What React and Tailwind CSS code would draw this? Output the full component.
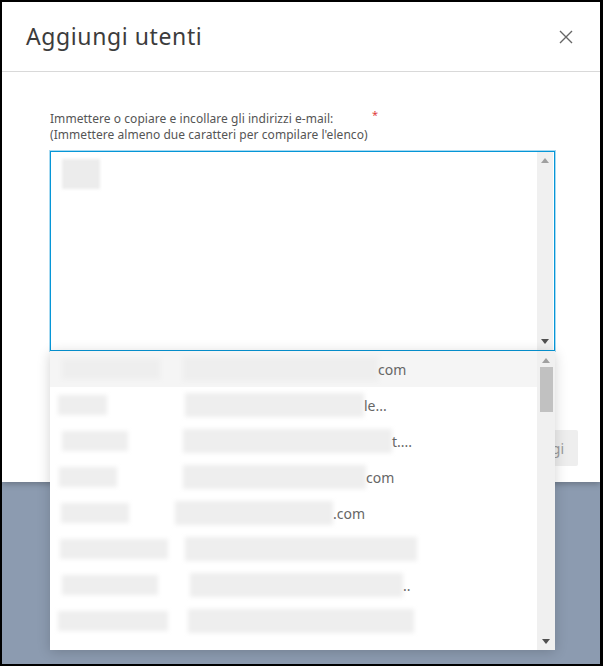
import React from "react";

const rows = [
  { l: [12, 110], r: [133, 195], tail: "com", hl: true },
  { l: [8, 57], r: [135, 179], tail: "le..." },
  { l: [12, 78], r: [133, 209], tail: "t...." },
  { l: [9, 67], r: [133, 183], tail: "com" },
  { l: [11, 79], r: [125, 158], tail: ".com" },
  { l: [10, 118], r: [135, 232], tail: "" },
  { l: [12, 108], r: [140, 213], tail: ".." },
  { l: [8, 118], r: [138, 226], tail: "" },
];

function Blur({ x, w, h = 22 }) {
  return (
    <div
      className="absolute top-1/2 -translate-y-1/2 bg-[#eeeeee] blur-[2px]"
      style={{ left: x, width: w, height: h }}
    />
  );
}

function Arrow({ up }) {
  return (
    <div
      className={
        up
          ? "w-0 h-0 border-x-[4px] border-x-transparent border-b-[5px] border-b-[#a0a0a0]"
          : "w-0 h-0 border-x-[4px] border-x-transparent border-t-[5px] border-t-[#505050]"
      }
    />
  );
}

export default function App() {
  return (
    <div
      className="w-[603px] h-[666px] bg-black pt-[2px] pl-[2px] pr-[3px] pb-[2px] overflow-hidden"
      style={{ fontFamily: '"Noto Sans", "Liberation Sans", sans-serif' }}
    >
      <div className="relative w-full h-full bg-[#8c9bb0]">
        {/* Dialog */}
        <div className="h-[480px] bg-white flex flex-col shadow-[0_2px_6px_rgba(0,0,0,0.25)]">
          <div className="h-[70px] border-b border-[#d9d9d9] flex items-center justify-between pl-[24px] pr-[26px] shrink-0">
            <span className="text-[23px] text-[#3c3c3c] tracking-[0.6px]">Aggiungi utenti</span>
            <svg width="16" height="16" viewBox="0 0 16 16" className="text-[#666]">
              <path d="M2 2 L14 14 M14 2 L2 14" stroke="currentColor" strokeWidth="1.4" fill="none" />
            </svg>
          </div>
          <div className="flex-1 pl-[48px] pr-[45px] pt-[39px] relative">
            <div className="flex text-[12px] leading-[16px] text-[#555] tracking-[0.05px]">
              <div className="w-[322px]">
                Immettere o copiare e incollare gli indirizzi e-mail:
                <br />
                (Immettere almeno due caratteri per compilare l'elenco)
              </div>
              <span className="text-[#e0403d] text-[11px] -mt-[4px]">*</span>
            </div>
            <div className="mt-[8px] h-[200px] w-[505px] border border-[#0696d7] shadow-[0_0_0_1px_rgba(6,150,215,0.35)] relative flex">
              <div className="flex-1 relative">
                <div className="absolute left-[11px] top-[7px] w-[38px] h-[30px] bg-[#ececec] blur-[1.5px]" />
              </div>
              <div className="w-[16px] mr-[1px] bg-[#f0f0f0] flex flex-col items-center justify-between py-[6px]">
                <Arrow up />
                <Arrow />
              </div>
            </div>
            {/* footer button */}
            <div className="absolute right-[22px] top-[358px] h-[36px] px-[14px] bg-[#eeeeee] rounded-[2px] flex items-center text-[14px] text-[#9a9a9a]">
              Aggiungi
            </div>
          </div>
        </div>

        {/* Dropdown list overlay */}
        <div className="absolute left-[48px] top-[349px] w-[505px] h-[299px] bg-white shadow-[0_2px_12px_rgba(0,0,0,0.18)] flex">
          <div className="flex-1 flex flex-col">
            {rows.map((r, i) => (
              <div
                key={i}
                className={
                  "relative h-[36px] shrink-0 text-[14px] text-[#666] " +
                  (r.hl ? "bg-[#f5f5f5]" : "bg-white")
                }
              >
                <Blur x={r.l[0]} w={r.l[1] - r.l[0]} h={20} />
                <Blur x={r.r[0]} w={r.r[1]} h={24} />
                <span
                  className="absolute top-1/2 -translate-y-1/2"
                  style={{ left: r.r[0] + r.r[1] }}
                >
                  {r.tail}
                </span>
              </div>
            ))}
          </div>
          <div className="w-[18px] bg-[#f0f0f0] relative flex flex-col items-center">
            <div className="mt-[7px]">
              <Arrow up />
            </div>
            <div className="mt-[4px] w-[13px] h-[45px] bg-[#c1c1c1]" />
            <div className="mt-auto mb-[6px]">
              <Arrow />
            </div>
          </div>
        </div>
      </div>
    </div>
  );
}
